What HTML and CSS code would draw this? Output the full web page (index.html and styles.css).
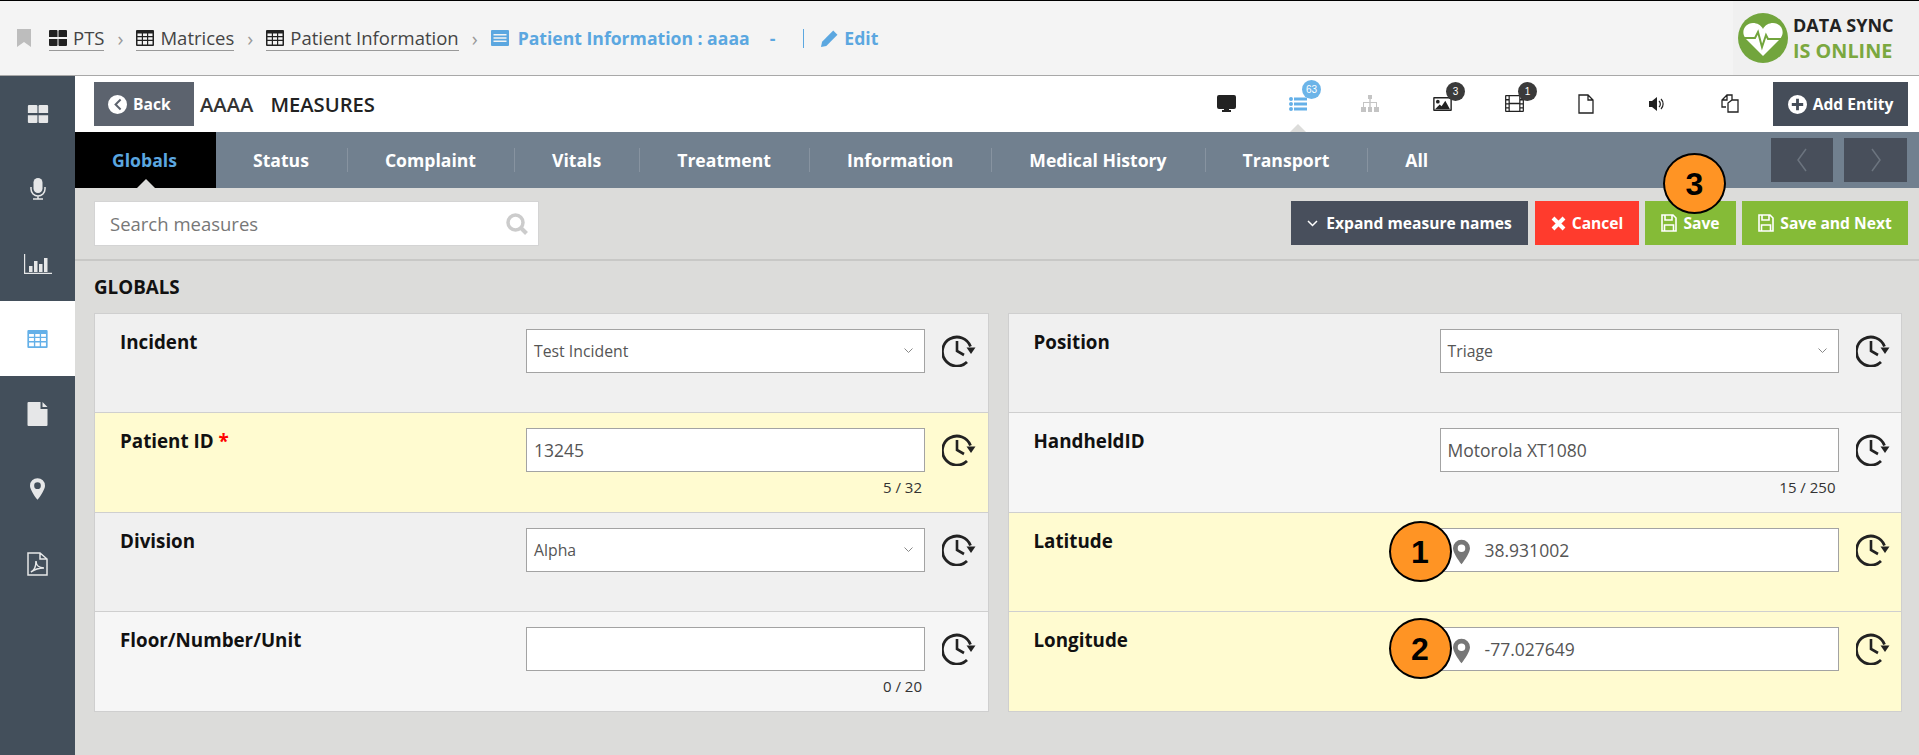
FILE: index.html
```html
<!doctype html>
<html>

<head>
    <title>Patient Information</title>
    <meta charset="utf-8">
    <link rel="stylesheet" href="styles.css">
</head>

<body>
    <svg class="defs" width="0" height="0">
        <symbol id="i-grid" viewBox="0 0 18 16"><path d="M1 0h6.500a1 1 0 0 1 1 1v6H0V1a1 1 0 0 1 1-1zM10.500 0H17a1 1 0 0 1 1 1v6H9.500V1a1 1 0 0 1 1-1zM0 9h8.500v6a1 1 0 0 1-1 1H1a1 1 0 0 1-1-1zM9.500 9H18v6a1 1 0 0 1-1 1h-6.500a1 1 0 0 1-1-1z"/></symbol>
        <symbol id="i-table" viewBox="0 0 18 16"><path fill-rule="evenodd" d="M1 0h16a1 1 0 0 1 1 1v14a1 1 0 0 1-1 1H1a1 1 0 0 1-1-1V1a1 1 0 0 1 1-1zm.5 3.500v2.500h4.300V3.500zm5.500 0v2.500h4V3.500zm5.200 0v2.500h4.300V3.500zM1.500 7.200v2.600h4.300V7.200zm5.500 0v2.600h4V7.200zm5.200 0v2.600h4.300V7.200zM1.500 11v3.500h4.300V11zm5.500 0v3.500h4V11zm5.200 0v3.500h4.300V11z"/></symbol>
        <symbol id="i-file" viewBox="0 0 20 24"><path d="M1 0h12v7h7v16a1 1 0 0 1-1 1H1a1 1 0 0 1-1-1V1a1 1 0 0 1 1-1zM15 0l5 5h-5z"/></symbol>
        <symbol id="i-pin" viewBox="0 0 18 26"><path fill-rule="evenodd" d="M9 0a9 9 0 0 1 9 9c0 4-5 12-9 17C5 21 0 13 0 9a9 9 0 0 1 9-9zm0 5a4 4 0 1 0 0 8 4 4 0 0 0 0-8z"/></symbol>
        <symbol id="i-history" viewBox="0 0 34 32"><path fill="none" stroke="#222" stroke-width="2.800" d="M28.500 11.500A14.500 14.500 0 1 0 25 27"/><path fill="none" stroke="#222" stroke-width="2.600" d="M15 6v10l7 4"/><path fill="#222" d="M24.500 12.500h9l-4.500 6.500z"/></symbol>
        <symbol id="i-save" viewBox="0 0 16 18"><path fill="none" stroke="#fff" stroke-width="1.600" d="M1 1h11l3 3v13H1zM4 1v5h7V1M3.500 17v-6h9v6"/></symbol>
    </svg>

    <header class="topbar">
        <svg class="bookmark" viewBox="0 0 14 18"><path d="M0 0h14v18l-7-5-7 5z"/></svg>
        <nav class="crumbs">
            <a class="crumb"><svg class="crumb-icon"><use href="#i-grid"/></svg>PTS</a>
            <span class="sep">&#8250;</span>
            <a class="crumb"><svg class="crumb-icon"><use href="#i-table"/></svg>Matrices</a>
            <span class="sep">&#8250;</span>
            <a class="crumb"><svg class="crumb-icon"><use href="#i-table"/></svg>Patient Information</a>
            <span class="sep">&#8250;</span>
            <div class="current">
                <svg class="crumb-icon" viewBox="0 0 18 16"><path fill-rule="evenodd" d="M1 0h16a1 1 0 0 1 1 1v14a1 1 0 0 1-1 1H1a1 1 0 0 1-1-1V1a1 1 0 0 1 1-1zm1.500 4v1.500h13V4zm0 3.200v1.500h13V7.200zm0 3.300V12h13v-1.500z"/></svg>
                <span>Patient Information : aaaa</span>
                <span class="dash">-</span>
                <span class="pipe"></span>
                <svg class="pencil" viewBox="0 0 16 16"><path d="M11.500 0.500l4 4L5 15l-5 1 1-5z"/></svg>
                <span>Edit</span>
            </div>
        </nav>
        <div class="sync">
            <svg class="sync-logo" viewBox="0 0 50 50">
                <circle cx="25" cy="25" r="25" fill="#72a53d"/>
                <path fill="#fff" d="M25 43L8 26c-6-7-1-16 7-16 4 0 8 2 10 6 2-4 6-6 10-6 8 0 13 9 7 16z"/>
                <path fill="none" stroke="#72a53d" stroke-width="2" d="M6 25h11l3-6 4 15 4-12 2 4h15"/>
            </svg>
            <div class="sync-text">
                <div>DATA SYNC</div>
                <div class="online">IS ONLINE</div>
            </div>
        </div>
    </header>

    <div class="layout">
        <aside class="sidebar">
            <div class="side-item"><svg width="22" height="18"><use href="#i-grid"/></svg></div>
            <div class="side-item"><svg width="16" height="22" viewBox="0 0 16 22"><rect x="3.500" width="9" height="15" rx="4.500"/><path fill="none" stroke="currentColor" stroke-width="1.500" d="M1 9v2a7 7 0 0 0 14 0V9M8 18v3M3 21h10"/></svg></div>
            <div class="side-item"><svg width="28" height="20" viewBox="0 0 28 20"><path d="M0 0h1.200v18.800H28V20H0zM5 12h3.500v6H5zM10 7h3.500v11H10zM15 10h3.500v8H15zM20 4h3.500v14H20z"/></svg></div>
            <div class="side-item active"><svg width="21" height="18"><use href="#i-table"/></svg></div>
            <div class="side-item"><svg width="21" height="24"><use href="#i-file"/></svg></div>
            <div class="side-item"><svg width="15" height="22"><use href="#i-pin"/></svg></div>
            <div class="side-item"><svg width="21" height="24" viewBox="0 0 21 24"><path fill="none" stroke="currentColor" stroke-width="1.500" d="M1 1h12l7 6v16H1zM13 1v6h7M4 20c4-2 5-8 5-11 0 4 3 7 8 7-4 0-9 1-13 4z"/></svg></div>
        </aside>

        <main class="main">
            <div class="entity-bar">
                <a class="btn btn-back">
                    <svg width="19" height="19" viewBox="0 0 20 20"><path fill="#fff" fill-rule="evenodd" d="M10 0a10 10 0 1 1 0 20 10 10 0 0 1 0-20zm2.500 4L6.500 10l6 6 1.500-1.500L9.500 10 14 5.500z"/></svg>
                    Back
                </a>
                <span class="entity-name">AAAA</span>
                <span class="entity-title">MEASURES</span>
                <div class="tools">
                    <div class="tool"><svg width="19" height="17" viewBox="0 0 19 17"><path d="M2 0h15a2 2 0 0 1 2 2v10a2 2 0 0 1-2 2h-5v1h2v2H5v-2h2v-1H2a2 2 0 0 1-2-2V2a2 2 0 0 1 2-2z"/></svg></div>
                    <div class="tool tool-on">
                        <svg width="18" height="14" viewBox="0 0 18 14"><path d="M0 2a2 2 0 1 1 4 0 2 2 0 0 1-4 0zM5 .500h13v3H5zM0 7a2 2 0 1 1 4 0 2 2 0 0 1-4 0zM5 5.500h13v3H5zM0 12a2 2 0 1 1 4 0 2 2 0 0 1-4 0zM5 10.500h13v3H5z"/></svg>
                        <span class="badge badge-blue">63</span>
                    </div>
                    <div class="tool tool-off"><svg width="18" height="17" viewBox="0 0 18 17"><path d="M7 0h4v4H9.700v3H16v5h2v5h-5v-5h2V8H9.700v4H11v5H7v-5h1.300V8H3v4h2v5H0v-5h2V7h6.300V4H7z"/></svg></div>
                    <div class="tool">
                        <svg width="19" height="14" viewBox="0 0 20 15"><path fill-rule="evenodd" d="M1 0h18a1 1 0 0 1 1 1v13a1 1 0 0 1-1 1H1a1 1 0 0 1-1-1V1a1 1 0 0 1 1-1zm.5 1.500v12h17v-12z"/><circle cx="5" cy="5" r="2"/><path d="M2 13l5-5 2 2 4-6 5 9z"/></svg>
                        <span class="badge">3</span>
                    </div>
                    <div class="tool">
                        <svg width="19" height="17" viewBox="0 0 20 18"><path fill-rule="evenodd" d="M1 0h18a1 1 0 0 1 1 1v16a1 1 0 0 1-1 1H1a1 1 0 0 1-1-1V1a1 1 0 0 1 1-1zm.3 1.300v3h2.400v-3zm0 4.400v3h2.400v-3zm0 4.300v3h2.400v-3zm0 4.400v2.300h2.400v-2.300zM5 1.300v7h10v-7zm0 8.400v7h10v-7zm11.300-8.400v3h2.400v-3zm0 4.400v3h2.400v-3zm0 4.300v3h2.400v-3zm0 4.400v2.300h2.400v-2.300z"/></svg>
                        <span class="badge">1</span>
                    </div>
                    <div class="tool"><svg width="16" height="20" viewBox="0 0 16 20"><path fill="none" stroke="#222" stroke-width="1.300" d="M1 1h9l5 5v13H1zM10 1v5h5"/></svg></div>
                    <div class="tool"><svg width="18" height="16" viewBox="0 0 18 16"><path d="M0 5h3l5-4v14l-5-4H0z"/><path fill="none" stroke="#222" stroke-width="1.200" d="M10 5a4 4 0 0 1 0 6M12 3a7 7 0 0 1 0 10"/></svg></div>
                    <div class="tool"><svg width="18" height="19" viewBox="0 0 18 19"><path fill="none" stroke="#222" stroke-width="1.300" d="M5 13H1V6l5-5h5v5M6 1v5H1M7 18V9l4-3h6v12z"/></svg></div>
                </div>
                <a class="btn btn-add">
                    <svg width="19" height="19" viewBox="0 0 20 20"><path fill="#fff" fill-rule="evenodd" d="M10 0a10 10 0 1 1 0 20 10 10 0 0 1 0-20zM8.500 4v4.500H4v3h4.500V16h3v-4.500H16v-3h-4.500V4z"/></svg>
                    Add Entity
                </a>
            </div>

            <div class="tabs">
                <a class="tab tab-on">Globals</a>
                <a class="tab">Status</a>
                <a class="tab">Complaint</a>
                <a class="tab">Vitals</a>
                <a class="tab">Treatment</a>
                <a class="tab">Information</a>
                <a class="tab">Medical History</a>
                <a class="tab">Transport</a>
                <a class="tab tab-last">All</a>
                <div class="pager">
                    <a class="page-btn"><svg width="12" height="26" viewBox="0 0 12 26"><path fill="none" stroke="#6c747f" stroke-width="1.500" d="M10 2L2 13l8 11"/></svg></a>
                    <a class="page-btn page-next"><svg width="12" height="26" viewBox="0 0 12 26"><path fill="none" stroke="#6c747f" stroke-width="1.500" d="M2 2l8 11-8 11"/></svg></a>
                </div>
            </div>

            <div class="actions">
                <div class="search">
                    <span>Search measures</span>
                    <svg width="22" height="22" viewBox="0 0 22 22"><circle cx="9.500" cy="9.500" r="7.500" fill="none" stroke="#ccc" stroke-width="3.500"/><path stroke="#ccc" stroke-width="4" d="M14.500 14.500l6 6"/></svg>
                </div>
                <a class="btn btn-expand">
                    <svg width="11" height="7" viewBox="0 0 11 7"><path fill="none" stroke="#fff" stroke-width="1.500" d="M1 1l4.500 4.500L10 1"/></svg>
                    Expand measure names
                </a>
                <a class="btn btn-cancel">
                    <svg width="15" height="15" viewBox="0 0 15 15"><path stroke="#fff" stroke-width="4" d="M2 2l11 11M13 2L2 13"/></svg>
                    Cancel
                </a>
                <a class="btn btn-green btn-save">
                    <svg width="16" height="18"><use href="#i-save"/></svg>
                    Save
                    <span class="callout callout-3">3</span>
                </a>
                <a class="btn btn-green">
                    <svg width="16" height="18"><use href="#i-save"/></svg>
                    Save and Next
                </a>
            </div>

            <div class="content">
                <h3 class="section-title">GLOBALS</h3>
                <div class="columns">
                    <div class="panel">
                        <div class="row">
                            <div class="label">Incident</div>
                            <div class="field"><div class="control select">Test Incident<svg width="9" height="6" viewBox="0 0 9 6"><path fill="none" stroke="#888" d="M.5.500l4 4 4-4"/></svg></div></div>
                            <svg class="history"><use href="#i-history"/></svg>
                        </div>
                        <div class="row row-yellow">
                            <div class="label">Patient ID <span class="req">*</span></div>
                            <div class="field"><div class="control">13245</div><div class="count">5 / 32</div></div>
                            <svg class="history"><use href="#i-history"/></svg>
                        </div>
                        <div class="row">
                            <div class="label">Division</div>
                            <div class="field"><div class="control select">Alpha<svg width="9" height="6" viewBox="0 0 9 6"><path fill="none" stroke="#888" d="M.5.500l4 4 4-4"/></svg></div></div>
                            <svg class="history"><use href="#i-history"/></svg>
                        </div>
                        <div class="row row-light">
                            <div class="label">Floor/Number/Unit</div>
                            <div class="field"><div class="control"></div><div class="count">0 / 20</div></div>
                            <svg class="history"><use href="#i-history"/></svg>
                        </div>
                    </div>
                    <div class="panel">
                        <div class="row">
                            <div class="label">Position</div>
                            <div class="field"><div class="control select">Triage<svg width="9" height="6" viewBox="0 0 9 6"><path fill="none" stroke="#888" d="M.5.500l4 4 4-4"/></svg></div></div>
                            <svg class="history"><use href="#i-history"/></svg>
                        </div>
                        <div class="row row-light">
                            <div class="label">HandheldID</div>
                            <div class="field"><div class="control">Motorola XT1080</div><div class="count">15 / 250</div></div>
                            <svg class="history"><use href="#i-history"/></svg>
                        </div>
                        <div class="row row-yellow">
                            <div class="label">Latitude</div>
                            <div class="field">
                                <div class="control geo"><svg class="pin"><use href="#i-pin"/></svg>38.931002</div>
                                <span class="callout callout-1">1</span>
                            </div>
                            <svg class="history"><use href="#i-history"/></svg>
                        </div>
                        <div class="row row-yellow">
                            <div class="label">Longitude</div>
                            <div class="field">
                                <div class="control geo"><svg class="pin"><use href="#i-pin"/></svg>-77.027649</div>
                                <span class="callout callout-2">2</span>
                            </div>
                            <svg class="history"><use href="#i-history"/></svg>
                        </div>
                    </div>
                </div>
            </div>
        </main>
    </div>
</body>

</html>
```

FILE: styles.css
```css
* {
    box-sizing: border-box;
}

html, body {
    margin: 0;
    height: 755px;
    overflow: hidden;
}

body {
    font-family: "Open Sans", "Liberation Sans", sans-serif;
    background-color: #dcdcda;
    color: #222;
}

.defs {
    position: absolute;
}

/* top bar */
.topbar {
    height: 76px;
    display: flex;
    align-items: center;
    padding-left: 17px;
    background-color: #f4f4f4;
    border-top: 1px solid #000;
    border-bottom: 1px solid #a8a8a8;
}

.bookmark {
    width: 14px;
    height: 18px;
    fill: #bdbdbd;
    margin-right: 18px;
}

.crumbs {
    display: flex;
    align-items: center;
    font-size: 18.500px;
}

.crumb {
    display: flex;
    align-items: center;
    gap: 6px;
    color: #444;
    border-bottom: 1px solid #999;
}

.crumb-icon {
    width: 18px;
    height: 16px;
    fill: #222;
}

.sep {
    width: 32px;
    text-align: center;
    color: #999;
    font-size: 20px;
}

.current {
    display: flex;
    align-items: center;
    color: #5ba7e0;
    font-size: 17.600px;
    font-weight: 700;
}

.current .crumb-icon {
    fill: #5ba7e0;
    margin-right: 9px;
}

.dash {
    margin-left: 20px;
}

.pipe {
    width: 1px;
    height: 19px;
    margin: 0 17px 0 28px;
    background-color: #5ba7e0;
}

.pencil {
    width: 17px;
    height: 17px;
    fill: #5ba7e0;
    margin-right: 6px;
}

.sync {
    margin-left: auto;
    width: 186px;
    height: 74px;
    display: flex;
    align-items: center;
    gap: 5px;
    padding-left: 5px;
    background-color: #f0f0f0;
}

.sync-logo {
    width: 50px;
    height: 50px;
}

.sync-text {
    font-size: 18px;
    font-weight: 700;
    line-height: 26px;
    color: #222;
}

.online {
    color: #7ba83f;
    font-size: 19.800px;
}

/* page frame */
.layout {
    display: flex;
    height: 679px;
}

.sidebar {
    width: 75px;
    flex: none;
    background-color: #434f5b;
}

.side-item {
    height: 75px;
    display: flex;
    align-items: center;
    justify-content: center;
    color: #e6e7e8;
    fill: #e6e7e8;
}

.side-item.active {
    background-color: #fff;
    fill: #64b0e8;
}

.main {
    flex: 1;
    min-width: 0;
}

.btn {
    display: flex;
    align-items: center;
    justify-content: center;
    gap: 6px;
    height: 44px;
    color: #fff;
    font-size: 15.600px;
    font-weight: 700;
}

/* entity row */
.entity-bar {
    height: 56px;
    display: flex;
    align-items: center;
    padding: 0 11px 0 19px;
    background-color: #fff;
}

.btn-back {
    width: 100px;
    justify-content: flex-start;
    padding-left: 14px;
    background-color: #5c636e;
}

.entity-name {
    margin-left: 6px;
    font-size: 20.200px;
    font-weight: 600;
    color: #333;
}

.entity-title {
    margin-left: 17px;
    font-size: 20.200px;
    font-weight: 600;
    color: #222;
}

.tools {
    margin-left: auto;
    margin-right: 7px;
    display: flex;
}

.tool {
    position: relative;
    width: 72px;
    height: 56px;
    display: flex;
    align-items: center;
    justify-content: center;
    padding-bottom: 1px;
    fill: #222;
}

.tool-on {
    fill: #64b0e8;
}

.tool-on::after {
    content: "";
    position: absolute;
    bottom: 0;
    left: 28px;
    border: 8px solid transparent;
    border-top: 0;
    border-bottom-color: #dcdcda;
}

.tool-off {
    fill: #c4c4c4;
}

.badge {
    position: absolute;
    top: 6px;
    left: 40px;
    width: 19px;
    height: 19px;
    border-radius: 50%;
    background-color: #3a3a3a;
    color: #fff;
    font-family: "Liberation Sans", sans-serif;
    font-size: 10px;
    line-height: 19px;
    text-align: center;
}

.badge-blue {
    top: 4px;
    background-color: #6cb4e8;
}

.btn-add {
    width: 135px;
    background-color: #454d59;
}

/* tabs */
.tabs {
    position: relative;
    height: 56px;
    display: flex;
    align-items: center;
    background-color: #71808f;
}

.tab {
    position: relative;
    padding: 0 38px 0 37px;
    height: 24px;
    line-height: 24px;
    border-right: 1px solid #8793a0;
    color: #fff;
    font-size: 17.600px;
    font-weight: 700;
}

.tab-on {
    width: 141px;
    height: 56px;
    line-height: 56px;
    padding: 0 37px;
    border-right: 0;
    background-color: #000;
    color: #5ba7e0;
}

.tab-on::after {
    content: "";
    position: absolute;
    bottom: 0;
    left: 62px;
    border: 9px solid transparent;
    border-top: 0;
    border-bottom-color: #dcdcda;
}

.tab-last {
    border-right: 0;
}

.pager {
    margin-left: auto;
    margin-right: 12px;
    display: flex;
    gap: 11px;
}

.page-btn {
    width: 62px;
    height: 44px;
    display: flex;
    align-items: center;
    justify-content: center;
    background-color: #484f5b;
}

.page-next {
    width: 63px;
}

/* action row */
.actions {
    height: 73px;
    display: flex;
    align-items: flex-start;
    gap: 6px;
    padding: 13px 11px 0 19px;
    border-bottom: 2px solid #c8c8c6;
}

.search {
    width: 445px;
    height: 45px;
    margin-right: auto;
    display: flex;
    align-items: center;
    justify-content: space-between;
    padding: 0 10px 0 15px;
    background-color: #fff;
    border: 1px solid #d4d4d4;
    color: #777;
    font-size: 18.500px;
}

.btn-expand {
    width: 237px;
    gap: 8px;
    margin-right: 1px;
    background-color: #484f5c;
}

.btn-cancel {
    width: 104px;
    background-color: #ff3b2d;
}

.btn-green {
    width: 166px;
    background-color: #85bb37;
}

.btn-save {
    position: relative;
    width: 91px;
}

/* measures */
.content {
    padding: 0 17px 0 19px;
}

.section-title {
    margin: 0;
    height: 52px;
    line-height: 52px;
    font-size: 18.800px;
    font-weight: 700;
    color: #111;
}

.columns {
    display: flex;
    gap: 19px;
}

.panel {
    flex: 1;
    min-width: 0;
    border: 1px solid #cfcfcf;
}

.row {
    height: 99.250px;
    display: flex;
    align-items: flex-start;
    padding: 15px 0 0 25px;
    background-color: #f0f0f0;
    border-bottom: 1px solid #cfcfcf;
}

.row:last-child {
    border-bottom: 0;
}

.row-yellow {
    background-color: #fffbd0;
}

.row-light {
    background-color: #f6f6f6;
}

.label {
    width: 406px;
    font-size: 18.800px;
    font-weight: 700;
    color: #111;
}

.req {
    color: #f00;
}

.field {
    position: relative;
    width: 399px;
}

.control {
    height: 44px;
    display: flex;
    align-items: center;
    padding: 0 7px;
    background-color: #fff;
    border: 1px solid #a3a3a3;
    color: #555;
    font-size: 17.500px;
}

.select {
    justify-content: space-between;
    padding-right: 11px;
    font-size: 15.800px;
}

.geo {
    padding-left: 44px;
}

.pin {
    position: absolute;
    left: 13px;
    top: 11px;
    width: 17px;
    height: 26px;
    fill: #777;
}

.count {
    margin-top: 5px;
    padding-right: 3px;
    text-align: right;
    font-size: 15px;
    color: #333;
}

.history {
    width: 34px;
    height: 32px;
    margin: 6px 0 0 17px;
}

/* numbered callouts on top of the screen */
.callout {
    position: absolute;
    z-index: 5;
    width: 63px;
    height: 61px;
    border-radius: 50%;
    background-color: #ff9424;
    border: 2px solid #000;
    color: #000;
    font-family: "Liberation Sans", sans-serif;
    font-size: 32px;
    font-weight: 700;
    line-height: 58px;
    text-align: center;
}

.callout-1 {
    left: -51px;
    top: -7px;
}

.callout-2 {
    left: -51px;
    top: -9px;
}

.callout-3 {
    left: 18px;
    top: -48px;
}
```
